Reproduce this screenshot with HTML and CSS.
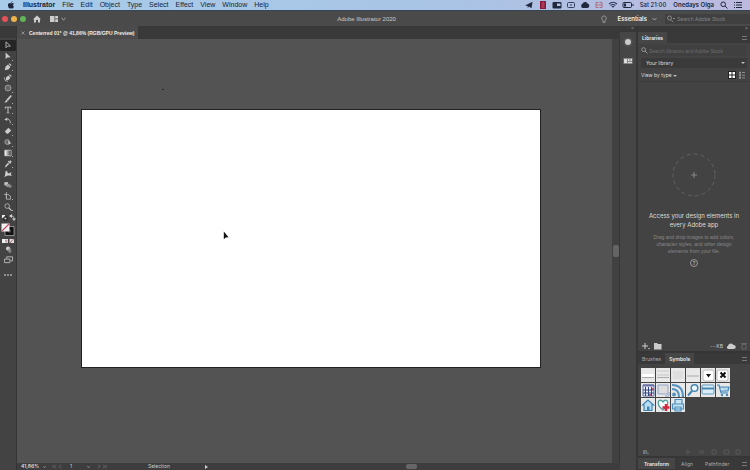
FILE: index.html
```html
<!DOCTYPE html>
<html lang="en">
<head>
<meta charset="utf-8">
<title>Adobe Illustrator 2020</title>
<link rel="stylesheet" href="styles.css">
</head>
<body>
<header class="menubar">
  <nav class="menus" aria-label="Menu bar">
    <svg class="apple" viewBox="0 0 10 10" aria-hidden="true"><path d="M6.900.3C6 .5 5.200 1.200 5.200 2.200 6.200 2.200 6.900 1.300 6.900.3zM8.700 7.200C8.100 8.600 7.500 9.500 6.700 9.500 6.100 9.500 5.800 9.100 5.100 9.100S4.100 9.500 3.600 9.500C2.400 9.500 1.200 7.200 1.200 5.400 1.200 3.600 2.300 2.600 3.400 2.600 4.200 2.600 4.700 3 5.200 3S6.200 2.500 7.100 2.500C7.800 2.500 8.300 2.900 8.600 3.300 7.100 4.200 7.300 6.600 8.700 7.200z"/></svg>
    <a href="#" class="app">Illustrator</a><a href="#">File</a><a href="#">Edit</a><a href="#">Object</a><a href="#">Type</a><a href="#">Select</a><a href="#">Effect</a><a href="#">View</a><a href="#">Window</a><a href="#">Help</a>
  </nav>
  <div class="tray">
    <svg viewBox="0 0 10 8" aria-hidden="true"><path d="M1 4.400 8.500.7 7.500 7.200 5 5.500 3.700 7V5z"/></svg>
    <svg viewBox="0 0 10 8" aria-hidden="true"><rect x="2" width="6" height="8" fill="#8a1736"/><path d="M3.500 2h3M3.500 4h3M3.500 6h3" stroke="#d0738c" stroke-width=".8"/></svg>
    <svg viewBox="0 0 10 8" aria-hidden="true"><rect x=".5" y="1" width="9" height="6.500" rx="1"/><path d="M5 2.500h3.500v2.500H5z" fill="#b3c3e6"/></svg>
    <svg viewBox="0 0 10 8" aria-hidden="true"><rect x="1.500" y="1.500" width="7" height="5" rx="1" fill="none" stroke="#35405f"/><path d="M4 4h2" stroke="#35405f"/></svg>
    <svg viewBox="0 0 10 8" aria-hidden="true"><path d="M2.500 7A2.300 2.300 0 0 1 2.500 2.800 2.800 2.800 0 0 1 7.500 2.500 2.300 2.300 0 0 1 7.500 7z"/></svg>
    <svg viewBox="0 0 10 8" aria-hidden="true"><path d="M4.500 1.500H2v5h2.500M5.500 1.500H8v5H5.500M2 4h6" fill="none" stroke="#ae6c80"/></svg>
    <svg viewBox="0 0 10 8" aria-hidden="true"><path d="M1 3Q5-.5 9 3M2.500 4.500Q5 2.500 7.500 4.500M4 6Q5 5 6 6" fill="none" stroke="#303a60" stroke-width="1.200"/></svg>
    <svg class="battery" viewBox="0 0 12 8" aria-hidden="true"><rect x="1" y="1.500" width="8.500" height="5" rx="1" fill="none" stroke="#20283d"/><path d="M2 2.500h2v3H2zM10.500 3h1v2h-1z"/></svg>
    <time>Sat 21:00</time><span class="user">Onedays Olga</span>
    <svg viewBox="0 0 10 8" aria-hidden="true"><path d="M6 5 8.500 7.500M6.500 3.300a2.300 2.300 0 1 1-4.600 0 2.300 2.300 0 0 1 4.600 0" fill="none" stroke="#20283d"/></svg>
    <svg viewBox="0 0 10 8" aria-hidden="true"><path d="M1 1.500h1M3 1.500h6M1 4h1M3 4h6M1 6.500h1M3 6.500h6" stroke="#20283d"/></svg>
  </div>
</header>

<div class="titlebar">
  <div class="title-left">
    <span class="lights"><button class="light close" aria-label="Close"></button><button class="light mini" aria-label="Minimize"></button><button class="light full" aria-label="Full screen"></button></span>
    <button class="home" aria-label="Home"><svg viewBox="0 0 8 8"><path d="M0 4.200 4 .5l4 3.700H7V7.500H5V5H3v2.500H1V4.200z"/></svg></button>
    <button class="arrange" aria-label="Arrange documents"><svg viewBox="0 0 16 8"><path d="M0 1h4.500v6H0zM5.200 1H8v2.600H5.200zM5.200 4.300H8V7H5.200z"/><path d="m11.500 3 2 1.800 2-1.800" fill="none" stroke="#bbb" stroke-width=".9"/></svg></button>
  </div>
  <h1>Adobe Illustrator 2020</h1>
  <div class="title-right">
    <svg class="bulb" viewBox="0 0 8 8" aria-hidden="true"><path d="M3 5.300a2.300 2.300 0 1 1 2 0v2H3z" fill="none" stroke="#aaa" stroke-width=".8"/></svg>
    <button class="workspace">Essentials <svg viewBox="0 0 5 4"><path d="m.5 1 2 2 2-2" fill="none" stroke="#bbb" stroke-width=".8"/></svg></button>
    <label class="stock"><svg viewBox="0 0 9 8"><path d="M4 4.700 6 7M4.500 3a2 2 0 1 1-4 0 2 2 0 0 1 4 0M6 3l1 1 1-1" fill="none" stroke="#999" stroke-width=".8"/></svg><input type="search" placeholder="Search Adobe Stock" aria-label="Search Adobe Stock"></label>
  </div>
</div>

<main class="workspace-area">
  <aside class="tools" aria-label="Tools">
    <div class="tools-head"></div>
    <div class="tool-list">
      <button class="on" aria-label="Selection"><svg viewBox="0 0 10 10"><path d="M2.500 1v7.500l2-2 3.500-.2z" fill="none" stroke="#ccc"/></svg></button>
      <button class="more" aria-label="Direct selection"><svg viewBox="0 0 10 10"><path d="M2 .5v8.300l2.300-2 4-.3z"/></svg></button>
      <button class="more" aria-label="Pen"><svg viewBox="0 0 10 10"><path d="m1 9 1-4.500L5 2l3 3-2.500 3zM5.800 1.300 7 .3l2.500 2.500-1 1z"/></svg></button>
      <button aria-label="Curvature"><svg viewBox="0 0 10 10"><path d="m2 8 .8-3.800L5.500 2 8 4.500 6 7.200zM6.200 1.200l1-1L9.700 2.500l-1 1z"/><path d="M.5 4Q0 9.500 5 9" fill="none" stroke="#ccc" stroke-width=".8"/></svg></button>
      <button class="more" aria-label="Ellipse"><svg viewBox="0 0 10 10"><circle cx="5" cy="5" r="3.700" fill="#666" stroke="#aaa"/></svg></button>
      <button class="more" aria-label="Paintbrush"><svg viewBox="0 0 10 10"><path d="m8.500 0 1.300 1.200-4.800 6-1.900-1.700zM3 5.800l1.700 1.700Q3.500 9.800.5 9.400 1.800 8 3 5.800z"/></svg></button>
      <button class="more" aria-label="Type"><svg viewBox="0 0 10 10"><path d="M1 1h8v2.300H8L7.800 2H5.600v6.300H7v.9H3v-.9h1.400V2H2.200L2 3.300H1z"/></svg></button>
      <button class="more" aria-label="Rotate"><svg viewBox="0 0 10 10"><path d="M2 3Q8 1 8 8" fill="none" stroke="#bbb" stroke-width="1.100"/><path d="M.5 3.300 4 .7v4z"/></svg></button>
      <button class="more" aria-label="Eraser"><svg viewBox="0 0 10 10"><path d="M1 5.500 5.500 1 9 4.500 5 8.500H3.500z"/></svg></button>
      <button class="more" aria-label="Shape builder"><svg viewBox="0 0 10 10"><circle cx="4" cy="5" r="3" fill="#666" stroke="#aaa"/><path d="M5 3.500 9.500 7H7l-1 2z"/></svg></button>
      <button class="more" aria-label="Gradient"><svg viewBox="0 0 10 10"><defs><linearGradient id="g"><stop stop-color="#fff"/><stop offset="1" stop-color="#333"/></linearGradient></defs><path d="M1 1.500h8v7H1z" fill="url(#g)" stroke="#ddd" stroke-width=".8"/></svg></button>
      <button class="more" aria-label="Eyedropper"><svg viewBox="0 0 10 10"><path d="M6.500 1.800 8 .3l1.700 1.700-1.500 1.500.5.5-1 1-3-3 1-1zM5 3.500l1.500 1.500L3 8.500l-2 .8.700-2z"/></svg></button>
      <button aria-label="Warp"><svg viewBox="0 0 10 10"><path d="M0 9.500C2 7.500 1 3 2.500.5 4.500 1 4 3 5 4S8 2 9.500 3.500C8 4.500 8.500 6 10 7.500 6.500 6.500 4 6.500 0 9.500z"/></svg></button>
      <button aria-label="Blend"><svg viewBox="0 0 10 10"><path d="M.5 1.500h4.500v4H.5z"/><path d="M3 3.500h4v4H3z" fill="#999"/><circle cx="7.500" cy="6.500" r="2" fill="#888"/></svg></button>
      <button class="more" aria-label="Artboard"><svg viewBox="0 0 10 10"><path d="M3 0v8M0 3h5l3 2v4H3V3" fill="none" stroke="#bbb"/></svg></button>
      <button class="more" aria-label="Zoom"><svg viewBox="0 0 10 10"><circle cx="4" cy="3.800" r="2.900" fill="none" stroke="#bbb"/><path d="m6 6 3.500 3.500" stroke="#ccc" stroke-width="1.400"/></svg></button>
    </div>
    <div class="swap"><svg viewBox="0 0 15 7"><path d="M1 1h3v3H1z" fill="#eee"/><path d="M3 3h3v3H3z" stroke="#111"/><path d="M9 2q4-1 4 3" fill="none" stroke="#bbb"/><path d="m8 2 3-2v4zM13 7l-2-2.500h4z"/></svg></div>
    <button class="paint" aria-label="Fill and stroke"><svg viewBox="0 0 14 13"><path d="M5.500 5h6v6h-6z" fill="none" stroke="#111" stroke-width="3"/><path d="M4 3.500h9v9H4z" fill="none" stroke="#ccc" stroke-width=".6"/><path d="M.5.5h8v8h-8z" fill="#f5f1f2"/><path d="m1 8 7-7" stroke="#bd526c" stroke-width="1.200"/></svg></button>
    <div class="modes"><svg viewBox="0 0 14 6"><path d="M1 1h6v4H1z" fill="#eee"/><path d="M4 1.500h2.500v3H4z" fill="#c8a5aa"/><path d="M8.500 1H13v4H8.500z" fill="#ddd"/><path d="m9 5 3.500-4" stroke="#a55" stroke-width=".8"/></svg></div>
    <div class="screen"><svg viewBox="0 0 10 10"><circle cx="4.500" cy="4" r="2.300"/><path d="M5 4h3v4.500H5z" fill="#888"/></svg></div>
    <div class="screen"><svg viewBox="0 0 10 10"><path d="M.5 4.500h6v4h-6zM3 4V2h6.500v4.500H7" fill="none" stroke="#bbb"/></svg></div>
    <button class="dots" aria-label="Edit toolbar"><i></i><i></i><i></i></button>
  </aside>

  <section class="document">
    <div class="doc-tabs"><button class="doc-tab"><svg viewBox="0 0 4 4"><path d="m.5.5 3 3m0-3-3 3" stroke="#aaa" stroke-width=".7"/></svg>Centerred 01* @ 41,86% (RGB/GPU Preview)</button></div>
    <div class="canvas">
      <div class="artboard"></div>
      <i class="speck"></i>
      <svg class="cursor" viewBox="0 0 6 9" aria-hidden="true"><path d="M.8.5v7.800l1.900-1.800 2.800-.2z" fill="#111"/></svg>
    </div>
    <div class="vscroll"><i></i></div>
    <footer class="status">
      <span class="zoom">41,86%</span><span class="caret"></span>
      <svg class="nav" viewBox="0 0 16 6" aria-hidden="true"><path d="M2 1v4m4-4L3 3l3 2m6-4L9 3l3 2" fill="none" stroke="#666"/></svg>
      <span class="page">1</span><span class="caret"></span>
      <svg class="nav" viewBox="0 0 16 6" aria-hidden="true"><path d="m3 1 3 2-3 2m6-4 3 2-3 2m4-4v4" fill="none" stroke="#666"/></svg>
      <span class="mode">Selection</span>
      <svg class="play" viewBox="0 0 4 4" aria-hidden="true"><path d="m1 0 3 2-3 2z"/></svg>
      <i class="thumb"></i>
    </footer>
  </section>

  <aside class="dock" aria-label="Collapsed panels">
    <div class="strip">«</div>
    <button aria-label="Color"><svg viewBox="0 0 10 10"><circle cx="5" cy="5" r="3" fill="#ccc"/><circle cx="5" cy="5" r="4" fill="none" stroke="#777" stroke-dasharray="1 1"/></svg></button>
    <button aria-label="Properties"><svg viewBox="0 0 10 10"><path d="M.5 2h9v6h-9z" fill="#888"/><path d="M1 3h3v4H1zM5 3h1.500v2H5zM7.500 3H9v2H7.500zM5 6h4v1H5z" fill="#ddd"/></svg></button>
  </aside>

  <aside class="panels">
    <div class="strip">»</div>
    <section class="libraries">
      <div class="tabs"><button class="tab active">Libraries</button><span class="burger"></span></div>
      <label class="lib-search"><svg viewBox="0 0 8 8"><path d="m4.500 4.500 3 3M5.200 3a2.200 2.200 0 1 1-4.400 0 2.200 2.200 0 0 1 4.400 0" fill="none" stroke="#aaa" stroke-width=".9"/></svg><input type="search" placeholder="Search libraries and Adobe Stock" aria-label="Search libraries"></label>
      <div class="lib-select"><select aria-label="Library"><option>Your library</option></select><span class="tri"></span></div>
      <div class="view-row"><button class="by">View by type <span class="tri"></span></button>
        <button class="grid-btn" aria-label="Grid view"><svg viewBox="0 0 8 8"><path d="M1 1h2.500v2.500H1zM4.500 1H7v2.500H4.500zM1 4.500h2.500V7H1zM4.500 4.500H7V7H4.500z" fill="#fff"/></svg></button>
        <button class="list-btn" aria-label="List view"><svg viewBox="0 0 8 8"><path d="M1.500 1h1v1.500h-1zM1.500 3.500h1V5h-1zM1.500 6h1v1.500h-1zM4 1.500h3M4 4.200h3M4 6.800h3" stroke="#aaa" stroke-width=".7" fill="none"/></svg></button></div>
      <div class="empty">
        <svg class="drop" viewBox="0 0 44 44" aria-hidden="true"><circle cx="22" cy="22" r="21" fill="none" stroke="#686868" stroke-width=".8" stroke-dasharray="4 3"/><path d="M22 19v6m-3-3h6" stroke="#888"/></svg>
        <h2>Access your design elements in<br>every Adobe app</h2>
        <p>Drag and drop images to add colors,<br>character styles, and other design<br>elements from your file.</p>
        <button class="help" aria-label="Help">?</button>
      </div>
      <div class="lib-foot">
        <svg viewBox="0 0 9 8" aria-hidden="true"><path d="M4 1v6M1 4h6" stroke="#ccc"/><path d="M7 6h2L8 7.500z"/></svg>
        <svg viewBox="0 0 9 8" aria-hidden="true"><path d="M1 1h3l1 1h3.500v5.500H1z"/></svg>
        <span class="size">-- KB</span>
        <svg class="cloud" viewBox="0 0 10 8" aria-hidden="true"><path d="M2 7A1.800 1.800 0 0 1 2 3.700 3 3 0 0 1 7.500 3 2 2 0 0 1 8 7z"/></svg>
        <svg viewBox="0 0 9 8" aria-hidden="true"><path d="M3 2.500h4V7H3zM2 1.500h6" fill="none" stroke="#666"/></svg>
      </div>
    </section>
    <section class="symbols">
      <div class="tabs"><button class="tab">Brushes</button><button class="tab active">Symbols</button><span class="burger"></span></div>
      <div class="symbol-grid">
        <svg viewBox="0 0 14 14"><path d="M1 9h12v1H1z" fill="#aaa"/><path d="M1 6h12v3H1z" fill="#fff"/></svg>
        <svg viewBox="0 0 14 14"><path d="M1 3h12M1 7h12" stroke="#c8c8c8"/><path d="M1 9.500h12" stroke="#aaa"/></svg>
        <svg viewBox="0 0 14 14"><path d="M2 3h10v8H2z" fill="#dfdfdf"/></svg>
        <svg viewBox="0 0 14 14"><path d="M1 8h12" stroke="#aaa"/></svg>
        <svg viewBox="0 0 14 14"><rect x="2" y="2" width="11" height="11" rx="2" fill="#fff" stroke="#bbb"/><path d="M5 6h5L7.500 9.500z" fill="#111"/></svg>
        <svg viewBox="0 0 14 14"><rect x="1" y="2" width="11" height="11" rx="2" fill="#fff" stroke="#bbb"/><path d="m4.500 4.500 5 5m0-5-5 5" stroke="#111" stroke-width="2"/></svg>
        <svg viewBox="0 0 14 14"><path d="M2 2h11v11H2z" fill="#eef" stroke="#5b74a8"/><path d="M2 2.500h11" stroke="#6c6fa5" stroke-width="2"/><path d="M4.500 4v9m3-9v9m3-9v9M2 7h11M2 10h11" stroke="#304778"/><path d="M11 5h2v2h-2zM8 11h2v2H8z" fill="#c4506e"/></svg>
        <svg viewBox="0 0 14 14"><path d="M2 2h10v9H2z" fill="#ddd" stroke="#91a5c8"/><path d="M9 13h4V9" fill="none" stroke="#91a5c8"/></svg>
        <svg viewBox="0 0 14 14"><path d="M1 2q11 0 11 12M1 6q7 0 7 8" fill="none" stroke="#5594c0" stroke-width="2"/><circle cx="3" cy="11.500" r="2" fill="#5594c0"/></svg>
        <svg viewBox="0 0 14 14"><circle cx="8.500" cy="5" r="3.300" fill="#eef8ff" stroke="#4487b5" stroke-width="1.500"/><path d="m6 8-4 4.500" stroke="#4487b5" stroke-width="2"/></svg>
        <svg viewBox="0 0 14 14"><rect x="1" y="2" width="12" height="9" rx="1" fill="#d8edf8" stroke="#6399bd"/><path d="M1 5.500h12" stroke="#4c88b2" stroke-width="2"/></svg>
        <svg viewBox="0 0 14 14"><path d="M1 2h2l2 8h7M4 4h9l-1 4H5" fill="#b6d8ec" stroke="#4788b7" stroke-width="1.200"/><circle cx="6" cy="12" r="1.200" fill="#4788b7"/><circle cx="11" cy="12" r="1.200" fill="#4788b7"/></svg>
        <svg viewBox="0 0 14 14"><path d="M1.500 7 7 2l5.500 5H11v5.500H3V7z" fill="#b9ddf0" stroke="#3e85b5" stroke-width="1.200"/><path d="M6 8.500h2.500v4H6z" fill="#3e85b5"/></svg>
        <svg viewBox="0 0 14 14"><path d="M7 12C-2 5 4-1 7 4c3-5 9 1 0 8z" fill="#f8fcff" stroke="#469c9d" stroke-width="1.200"/><path d="M10 6v7M6.500 9.500h7" stroke="#d1263b" stroke-width="2.400"/></svg>
        <svg viewBox="0 0 14 14"><path d="M4 6V1.500h7V6M1.500 6h11v5h-11zM4 9h6v4H4z" fill="#c8e5f3" stroke="#4a8ebb" stroke-width="1.200"/></svg>
      </div>
      <div class="symbol-foot"><span class="lib">II\.</span><svg class="faint" viewBox="0 0 56 6" aria-hidden="true"><path d="M2 1v4l3-2zM14 2h5M14 4h5M27 1h4v4h-4zM39 1h5v4h-5zM51 1h4v4h-4z" fill="none" stroke="#585858"/></svg></div>
    </section>
    <div class="tabs last"><button class="tab active">Transform</button><button class="tab">Align</button><button class="tab">Pathfinder</button><span class="burger"></span></div>
  </aside>
</main>
</body>
</html>
```
FILE: styles.css
```css
* { box-sizing: border-box; }
html, body { height: 100%; }
body { margin: 0; display: flex; flex-direction: column; overflow: hidden; background: #383838; color: #ccc; font: 6px/8px Inter, "Liberation Sans", sans-serif; }
button, input, select { margin: 0; padding: 0; border: 0; background: none; color: inherit; font: inherit; appearance: none; min-width: 0; outline: 0; }
button { white-space: nowrap; }
svg { display: block; flex: none; fill: #ccc; }
h1, h2, p { margin: 0; font-weight: 400; }

.menubar { display: flex; justify-content: space-between; align-items: center; flex: none; height: 11px; padding: 0 7px; border-bottom: 1px solid #344553; background: linear-gradient(90deg, #a7cbe9, #a9c4e5 60%, #bdb9df); color: #162337; font: 7px/10px "Liberation Sans", sans-serif; }
.menubar svg { width: 10px; height: 8px; fill: #20283d; }
.menus { display: flex; align-items: center; gap: 7px; }
.menus a { color: inherit; text-decoration: none; }
.menus .apple { width: 8px; height: 8px; margin-right: 1px; }
.menus .app { font-weight: 700; }
.tray { display: flex; align-items: center; gap: 4px; white-space: nowrap; font: 500 6px/10px Inter, sans-serif; }
.tray .battery { width: 12px; margin-right: 2px; }
.tray time { margin-right: 3px; }
.user { margin-right: 1px; font-weight: 600; }

.titlebar { display: grid; grid-template-columns: 20fr auto 21fr; align-items: center; flex: none; height: 15px; background: #4a4a4a; }
.title-left, .title-right, .lights { display: flex; align-items: center; }
.title-left { padding-left: 2px; }
.lights { gap: 3px; }
.light { width: 6px; height: 6px; border-radius: 50%; }
.close { background: #e5525b; }
.mini { background: #edb44c; }
.full { background: #62b556; }
.home { margin-left: 7px; }
.home svg { width: 8px; height: 8px; }
.arrange { margin-left: 9px; }
.arrange svg { width: 16px; height: 8px; }
h1 { font: 6px/8px "Liberation Sans", sans-serif; }
.title-right { justify-content: flex-end; }
.bulb { width: 8px; height: 8px; margin-right: 10px; }
.workspace { display: flex; align-items: center; gap: 5px; margin-right: 8px; color: #eee; font-weight: 600; }
.workspace svg { width: 5px; height: 4px; }
.stock { display: flex; align-items: center; gap: 1px; width: 85px; height: 10px; padding-left: 2px; background: #404040; }
.stock svg { width: 9px; height: 8px; }
.stock input { width: 70px; font: 5px/8px Inter, sans-serif; }
input::placeholder { color: #858585; opacity: 1; }

.workspace-area { display: grid; grid-template-columns: 17px 1fr 18px 112px; flex: 1; min-height: 0; }

.tools { display: flex; flex-direction: column; align-items: center; background: #434343; border-right: 1px solid #353535; }
.tools-head { width: 100%; height: 13px; background: #393939; border-bottom: 1px solid #444; }
.tool-list { display: grid; grid-template-rows: repeat(16, 1fr); width: 100%; height: 173px; padding-top: 1px; }
.tool-list button { display: grid; place-items: center; position: relative; }
.tool-list svg { width: 8px; height: 8px; }
.tool-list .on { background: #252525; border-radius: 1px; }
.more::after { content: ""; position: absolute; right: 3px; bottom: 1px; width: 1px; height: 1px; background: #aaa; }
.swap svg { width: 15px; height: 7px; margin: 2px 0; }
.paint svg { width: 14px; height: 13px; }
.modes svg { width: 14px; height: 6px; margin-top: 2px; }
.screen svg { width: 9px; height: 9px; margin-top: 1px; }
.dots { display: flex; gap: 1px; margin-top: 10px; }
.dots i { width: 2px; height: 2px; border-radius: 50%; background: #aaa; }

.document { display: grid; grid-template: 13px 1fr 7px / 1fr 8px; min-width: 0; }
.doc-tabs { grid-column: 1 / 3; display: flex; background: #393939; }
.doc-tab { display: flex; align-items: center; gap: 4px; padding: 0 4px; background: #4b4b4b; color: #eee; font: 700 5px/8px "Liberation Sans", sans-serif; }
.doc-tab svg { width: 4px; height: 4px; }
.canvas { position: relative; background: #535353; }
.artboard { position: absolute; inset: 70px 71px 95px 64px; background: #fff; border: 1px solid #222; }
.speck { position: absolute; left: 145px; top: 50px; width: 2px; height: 1px; background: #2b2b2b; }
.cursor { position: absolute; left: 206px; top: 192px; width: 6px; height: 9px; }
.vscroll { display: flex; flex-direction: column; align-items: center; background: #414141; border-right: 1px solid #363636; }
.vscroll i { width: 6px; height: 12px; margin-top: 206px; border-radius: 2px; background: #646464; }
.status { grid-column: 1 / 3; display: flex; align-items: center; background: #3d3d3d; font-size: 5px; line-height: 7px; padding-left: 4px; }
.zoom { width: 22px; font-weight: 600; color: #ddd; }
.caret { width: 3px; height: 3px; border-right: 1px solid #888; border-bottom: 1px solid #888; transform: rotate(45deg) scale(.7); }
.nav { width: 16px; height: 5px; margin: 0 4px; }
.page { width: 17px; }
.mode { margin-left: 34px; }
.play { width: 4px; height: 4px; margin-left: 34px; }
.thumb { width: 11px; height: 5px; margin-left: auto; margin-right: 203px; border-radius: 2px; background: #666; }

.dock { display: flex; flex-direction: column; align-items: center; gap: 9px; background: #464646; border-right: 2px solid #363636; }
.strip { flex: none; align-self: stretch; height: 6px; padding-right: 2px; background: #383838; color: #888; font-size: 5px; line-height: 5px; text-align: right; }
.dock .strip { margin-bottom: -4px; }
.dock svg { width: 10px; height: 10px; }

.panels { display: flex; flex-direction: column; min-width: 0; background: #434343; }
.tabs { display: flex; flex: none; height: 11px; background: #393939; }
.tab { padding: 0 4px; color: #aaa; font-size: 5px; }
.tab.active { background: #464646; color: #eee; font-weight: 600; }
.burger { width: 5px; height: 4px; margin: 4px 3px 0 auto; border: solid #777; border-width: 1px 0; }
.libraries { display: flex; flex-direction: column; flex: 1; min-height: 0; }
.lib-search { display: flex; align-items: center; gap: 1px; height: 11px; margin: 2px 4px 0 3px; background: #404040; }
.lib-search svg { width: 7px; height: 7px; }
.lib-search input { flex: 1; font: 5px/8px "Liberation Sans", sans-serif; }
.lib-search input::placeholder { color: #6c6c6c; }
.lib-select { display: flex; align-items: center; height: 10px; margin: 2px 3px 0; padding: 0 2px 0 5px; background: #3a3a3a; }
.lib-select select { flex: 1; font-size: 5px; line-height: 8px; color: #ddd; }
.tri { display: inline-block; border: 2px solid transparent; border-top-color: #bbb; border-bottom: 0; }
.view-row { display: flex; align-items: center; gap: 2px; height: 14px; padding: 0 4px 0 3px; border-bottom: 1px solid #3b3b3b; }
.by { margin-right: auto; font-size: 5px; color: #ddd; }
.view-row svg { width: 8px; height: 8px; }
.grid-btn { background: #222; }
.empty { display: flex; flex-direction: column; align-items: center; flex: 1; padding-top: 71px; text-align: center; }
.drop { width: 44px; height: 44px; }
.empty h2 { margin-top: 14px; font-size: 6px; line-height: 9px; color: #ddd; white-space: nowrap; }
.empty p { margin-top: 5px; font: 5px/7px "Liberation Sans", sans-serif; color: #888; white-space: nowrap; }
.help { width: 8px; height: 8px; margin-top: 4px; border: 1px solid #999; border-radius: 50%; font-size: 5px; line-height: 6px; }
.lib-foot { display: flex; align-items: center; gap: 3px; height: 11px; padding: 0 2px 0 3px; }
.lib-foot svg { width: 9px; height: 8px; }
.size { margin-left: auto; font-size: 5px; }
.lib-foot .cloud { width: 10px; }
.symbols { border-top: 2px solid #363636; }
.symbol-grid { display: grid; grid-template-columns: repeat(6, 14px); gap: 1px; padding: 4px 3px 36px; }
.symbol-grid svg { width: 14px; height: 14px; background: #e8e8e8; }
.symbol-foot { display: flex; align-items: center; justify-content: space-between; height: 8px; padding: 0 9px 0 5px; font-size: 5px; }
.faint { width: 56px; height: 6px; }
.last { height: 14px; border-top: 2px solid #363636; border-bottom: 1px solid #363636; }
.last .tab { padding: 0 6px; }
```
